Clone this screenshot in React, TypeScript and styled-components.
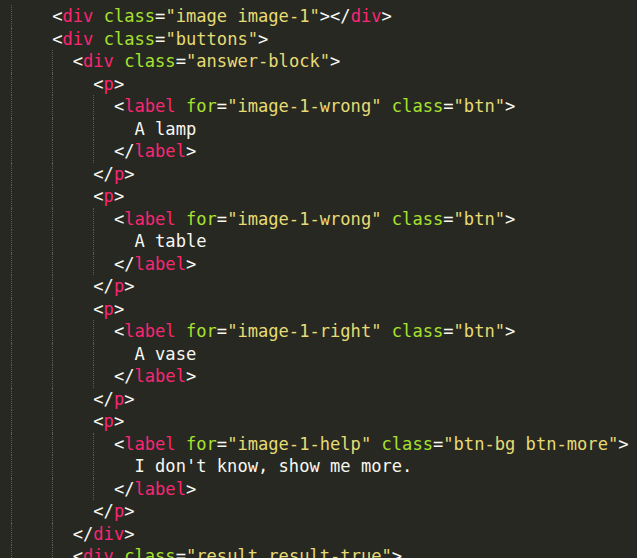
import React from "react";
import styled, { createGlobalStyle } from "styled-components";

const Global = createGlobalStyle`
  html, body {
    margin: 0;
    padding: 0;
    background: #272822;
    overflow: hidden;
  }
`;

type Kind = "punct" | "tag" | "attr" | "str" | "text";

const colors: Record<Kind, string> = {
  punct: "#f8f8f2",
  tag: "#f92672",
  attr: "#a6e22e",
  str: "#e6db74",
  text: "#f8f8f2",
};

const Editor = styled.div`
  width: 637px;
  height: 558px;
  box-sizing: border-box;
  padding: 5px 0 0 11px;
  background: #272822;
  font-family: "DejaVu Sans Mono", "Liberation Mono", monospace;
  font-size: 17.1px;
  color: #f8f8f2;
  overflow: hidden;
`;

const Line = styled.div`
  display: flex;
  height: 22.5px;
  line-height: 22.5px;
  white-space: pre;
`;

const Indent = styled.span<{ $cols: number }>`
  flex: none;
  width: ${(p) => p.$cols}ch;
  box-sizing: border-box;
  border-left: 1px dotted #5c5c55;
`;

const Tok = styled.span<{ $kind: Kind }>`
  color: ${(p) => colors[p.$kind]};
`;

const source: [number, string][] = [
  [4, '<div class="image image-1"></div>'],
  [4, '<div class="buttons">'],
  [6, '<div class="answer-block">'],
  [8, "<p>"],
  [10, '<label for="image-1-wrong" class="btn">'],
  [12, "A lamp"],
  [10, "</label>"],
  [8, "</p>"],
  [8, "<p>"],
  [10, '<label for="image-1-wrong" class="btn">'],
  [12, "A table"],
  [10, "</label>"],
  [8, "</p>"],
  [8, "<p>"],
  [10, '<label for="image-1-right" class="btn">'],
  [12, "A vase"],
  [10, "</label>"],
  [8, "</p>"],
  [8, "<p>"],
  [10, '<label for="image-1-help" class="btn-bg btn-more">'],
  [12, "I don't know, show me more."],
  [10, "</label>"],
  [8, "</p>"],
  [6, "</div>"],
  [6, '<div class="result result-true">'],
];

function tokenize(s: string): { kind: Kind; text: string }[] {
  if (!s.startsWith("<")) return [{ kind: "text", text: s }];
  const out: { kind: Kind; text: string }[] = [];
  const re = /(<\/?)|(>)|("[^"]*")|(=)|(\s+)|([A-Za-z][\w-]*)/g;
  let afterOpen = false;
  let m: RegExpExecArray | null;
  while ((m = re.exec(s))) {
    if (m[1]) {
      out.push({ kind: "punct", text: m[1] });
      afterOpen = true;
    } else if (m[2]) out.push({ kind: "punct", text: m[2] });
    else if (m[3]) out.push({ kind: "str", text: m[3] });
    else if (m[4]) out.push({ kind: "punct", text: m[4] });
    else if (m[5]) out.push({ kind: "text", text: m[5] });
    else if (m[6]) {
      out.push({ kind: afterOpen ? "tag" : "attr", text: m[6] });
      afterOpen = false;
    }
  }
  return out;
}

function indentCells(n: number): number[] {
  const cells: number[] = [];
  let rest = n;
  while (rest > 0) {
    const c = Math.min(4, rest);
    cells.push(c);
    rest -= c;
  }
  return cells;
}

export default function App() {
  return (
    <>
      <Global />
      <Editor>
        {source.map(([indent, text], i) => (
          <Line key={i}>
            {indentCells(indent).map((c, j) => (
              <Indent key={j} $cols={c} />
            ))}
            <span>
              {tokenize(text).map((t, k) => (
                <Tok key={k} $kind={t.kind}>
                  {t.text}
                </Tok>
              ))}
            </span>
          </Line>
        ))}
      </Editor>
    </>
  );
}
